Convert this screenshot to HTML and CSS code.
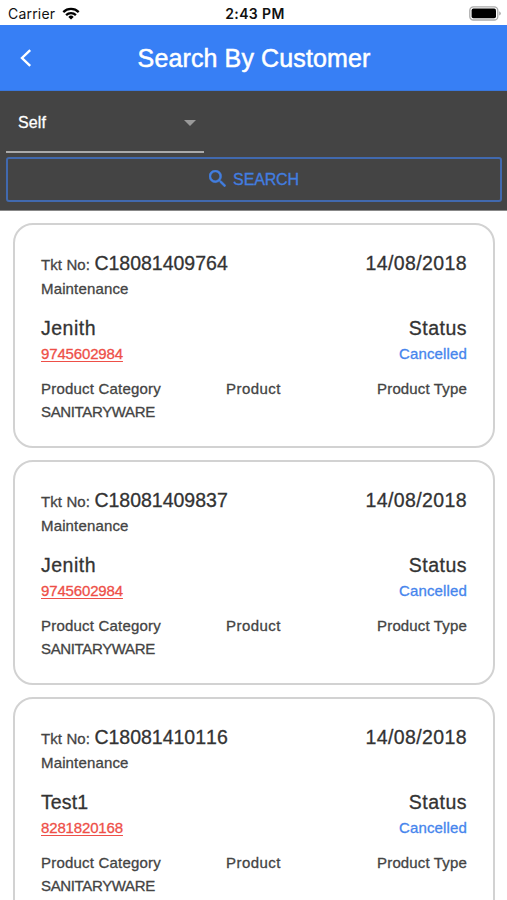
FILE: index.html
```html
<!DOCTYPE html>
<html lang="en">
<head>
<meta charset="utf-8">
<meta name="viewport" content="width=device-width">
<title>Search By Customer</title>
<link rel="stylesheet" href="styles.css">
</head>
<body>
<div class="statusbar">
  <div class="carrier">Carrier
    <svg class="wifi" viewBox="0 0 18 13" width="18" height="13"><g fill="none" stroke="#000" stroke-width="2.3"><path d="M1.3 5.1a11 11 0 0 1 15.4 0"/><path d="M4.1 8.1a7 7 0 0 1 9.8 0"/></g><path d="M9 12.6 6.3 9.9a3.9 3.9 0 0 1 5.4 0Z"/></svg>
  </div>
  <div class="time">2:43 PM</div>
  <svg class="battery" viewBox="0 0 32 15" width="32" height="15"><rect x=".8" y=".8" width="28" height="13.2" rx="3.6" fill="#fff" stroke="#aaa" stroke-width="1.3"/><rect x="2.6" y="2.6" width="24.4" height="9.6" rx="1.8"/><path d="M30.3 5.2q1.4.8 1.4 2.2t-1.4 2.2Z" fill="#999"/></svg>
</div>
<header class="header">
  <svg class="back" viewBox="0 0 12 18" width="12" height="18"><path d="M10.2 1.2 2 9l8.200 7.800" fill="none" stroke="#fff" stroke-width="2.4"/></svg>
  <h1>Search By Customer</h1>
</header>
<section class="filter">
  <div class="select"><span>Self</span><svg viewBox="0 0 12 6" width="12" height="6"><path d="M0 0h12L6 6Z" fill="#999"/></svg></div>
  <div class="search"><svg viewBox="3 3 17.500 17.500" width="17" height="17"><path fill="#427ee0" stroke="#427ee0" stroke-width=".5" d="M15.500 14h-.79l-.28-.27A6.470 6.470 0 0 0 16 9.500 6.500 6.500 0 1 0 9.500 16c1.610 0 3.090-.59 4.230-1.570l.27.28v.79l5 4.990L20.490 19l-4.990-5zm-6 0C7.010 14 5 11.990 5 9.500S7.010 5 9.500 5 14 7.010 14 9.500 11.990 14 9.500 14z"/></svg><span>SEARCH</span></div>
</section>
<main class="list">
  <article class="card">
    <div class="row ticket"><div><span class="label">Tkt No:</span> <span class="number">C18081409764</span></div><span class="big date">14/08/2018</span></div>
    <div class="row kind">Maintenance</div>
    <div class="row name"><span class="big">Jenith</span><span class="big">Status</span></div>
    <div class="row contact"><span class="phone">9745602984</span><span class="state">Cancelled</span></div>
    <div class="row product"><span class="category">Product Category</span><span class="item">Product</span><span class="type">Product Type</span></div>
    <div class="row value">SANITARYWARE</div>
  </article>
  <article class="card">
    <div class="row ticket"><div><span class="label">Tkt No:</span> <span class="number">C18081409837</span></div><span class="big date">14/08/2018</span></div>
    <div class="row kind">Maintenance</div>
    <div class="row name"><span class="big">Jenith</span><span class="big">Status</span></div>
    <div class="row contact"><span class="phone">9745602984</span><span class="state">Cancelled</span></div>
    <div class="row product"><span class="category">Product Category</span><span class="item">Product</span><span class="type">Product Type</span></div>
    <div class="row value">SANITARYWARE</div>
  </article>
  <article class="card">
    <div class="row ticket"><div><span class="label">Tkt No:</span> <span class="number">C18081410116</span></div><span class="big date">14/08/2018</span></div>
    <div class="row kind">Maintenance</div>
    <div class="row name"><span class="big short">Test1</span><span class="big">Status</span></div>
    <div class="row contact"><span class="phone">8281820168</span><span class="state">Cancelled</span></div>
    <div class="row product"><span class="category">Product Category</span><span class="item">Product</span><span class="type">Product Type</span></div>
    <div class="row value">SANITARYWARE</div>
  </article>
</main>
</body>
</html>
```
FILE: styles.css
```css
* { box-sizing: border-box; }
body {
  margin: 0;
  height: 900px;
  overflow: hidden;
  background: #fff;
  color: #444;
  font-family: "Liberation Sans", Arial, sans-serif;
  font-size: 15px;
  -webkit-text-stroke: 0.3px currentColor;
}
svg { display: block; flex: none; }
.statusbar {
  display: grid;
  grid-template-columns: 1fr auto 1fr;
  align-items: center;
  height: 25px;
  padding: 2px 6px 0 8px;
  color: #111;
  font: 14px/20px Inter, sans-serif;
  -webkit-text-stroke: 0;
}
.carrier { display: flex; gap: 7px; align-items: center; letter-spacing: 0.2px; }
.time { padding-left: 1px; font-weight: 600; letter-spacing: 0.4px; }
.battery { justify-self: end; }
.header {
  display: grid;
  grid-template-columns: 20px 1fr 20px;
  align-items: center;
  height: 66px;
  padding: 0 20px;
  background: #377ff5;
  border-bottom: 1px solid #3977dd;
  color: #fff;
}
.header h1 {
  margin: 0;
  padding-left: 1px;
  text-align: center;
  font-size: 25px;
  font-weight: 400;
  line-height: 30px;
  letter-spacing: 0.12px;
  white-space: nowrap;
  -webkit-text-stroke: 0.5px currentColor;
}
.filter {
  height: 120px;
  padding: 0 5px 0 6px;
  background: #444;
  border-bottom: 1px solid #888;
}
.select {
  display: flex;
  align-items: center;
  justify-content: space-between;
  width: 198px;
  height: 62px;
  padding: 4px 8px 0 12px;
  border-bottom: 2px solid #aaa;
  color: #fff;
  font-size: 16px;
  letter-spacing: 0.1px;
}
.search {
  display: flex;
  align-items: center;
  justify-content: center;
  gap: 7px;
  height: 45px;
  margin-top: 4px;
  border: 2px solid #4169ae;
  border-radius: 3px;
  color: #427ee0;
  font-size: 16px;
  letter-spacing: -0.15px;
}
.search svg { margin-top: -2px; }
.list {
  display: flex;
  flex-direction: column;
  gap: 12px;
  padding: 12px 12px 0 13px;
}
.card {
  flex: none;
  height: 225px;
  padding: 26px 26px 0;
  border: 2px solid #d2d2d2;
  border-radius: 20px;
}
.row {
  display: flex;
  align-items: baseline;
  justify-content: space-between;
  height: 24px;
  line-height: 24px;
  letter-spacing: 0.15px;
  white-space: nowrap;
}
.ticket { height: 26px; font-kerning: none; }
.number, .big { color: #333; font-size: 19.5px; }
.label { letter-spacing: 0.1px; }
.number { letter-spacing: 0; }
.big { letter-spacing: 0.5px; }
.date { letter-spacing: 0.4px; }
.short { letter-spacing: 0.1px; }
.name { margin-top: 15px; }
.contact { height: 23px; margin-top: 2px; }
.phone {
  color: #ee4f48;
  letter-spacing: -0.15px;
  text-decoration: underline;
  text-decoration-thickness: 1px;
  text-underline-offset: 2px;
}
.state { color: #4685ed; }
.product {
  display: grid;
  grid-template-columns: 185px 1fr auto;
  height: 23px;
  margin-top: 12px;
}
.category { letter-spacing: 0.2px; }
.item { letter-spacing: 0.45px; }
.value { letter-spacing: -0.35px; }
```
